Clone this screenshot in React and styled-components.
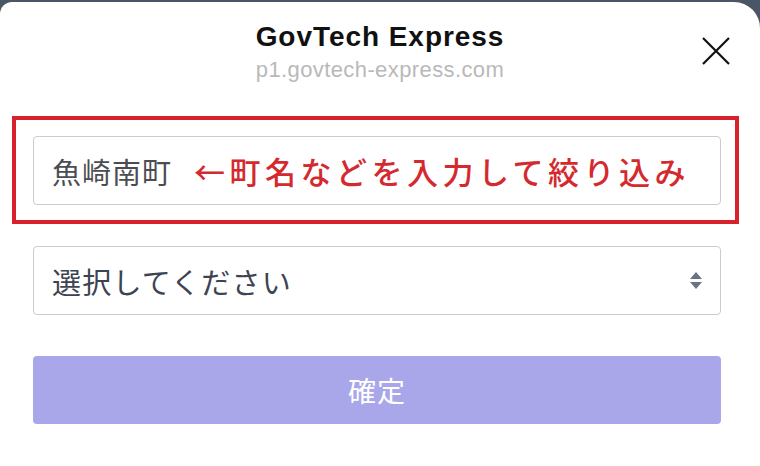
import React from "react";
import styled, { createGlobalStyle } from "styled-components";

const GlobalStyle = createGlobalStyle`
  html, body {
    margin: 0;
    padding: 0;
    background: #4a5566;
  }
  body {
    font-family: "Liberation Sans", "Noto Sans CJK JP", sans-serif;
  }
`;

const Sheet = styled.div`
  margin-top: 2px;
  height: 464px;
  background: #ffffff;
  border-radius: 12px 26px 0 0;
  overflow: hidden;
`;

const Header = styled.div`
  display: grid;
  grid-template-columns: 1fr auto 1fr;
  align-items: start;
  padding: 17px 28px 0 28px;
`;

const TitleBlock = styled.div`
  grid-column: 2;
  display: flex;
  flex-direction: column;
  align-items: center;
`;

const Title = styled.div`
  font-family: "Liberation Sans", sans-serif;
  font-size: 28px;
  font-weight: bold;
  letter-spacing: 0.95px;
  line-height: 36px;
  color: #111;
`;

const SubTitle = styled.div`
  margin-top: 1px;
  font-family: "Liberation Sans", sans-serif;
  font-size: 22px;
  letter-spacing: 0.4px;
  line-height: 28px;
  color: #b9b9b9;
`;

const CloseButton = styled.div`
  grid-column: 3;
  justify-self: end;
  margin-top: 16px;
  width: 32px;
  height: 32px;
`;

const Content = styled.div`
  display: flex;
  flex-direction: column;
  padding: 0 39px 0 33px;
`;

const Highlight = styled.div`
  margin: 32px -18px 0 -21px;
  padding: 16px 14px 15px 17px;
  border: 4px solid #d8222b;
`;

const Field = styled.div`
  box-sizing: border-box;
  display: flex;
  align-items: center;
  height: 69px;
  padding: 0 ${(p) => p.$padRight || 18}px 0 18px;
  border: 1.5px solid #c8cbd0;
  border-radius: 4px;
  background: #fff;
  margin-top: ${(p) => p.$gap || 0}px;
`;

const Value = styled.span`
  font-family: "Noto Sans CJK JP", sans-serif;
  font-size: 29px;
  color: #4b4d52;
  letter-spacing: 1px;
`;

const Hint = styled.span`
  margin-left: 22px;
  font-family: "Noto Sans CJK JP", sans-serif;
  font-size: 31px;
  font-weight: 500;
  letter-spacing: 4.5px;
  color: #d42a2f;
`;

const SelectText = styled.span`
  flex: 1;
  font-family: "Noto Sans CJK JP", sans-serif;
  font-size: 29px;
  letter-spacing: 1.2px;
  color: #3d4350;
`;

const ConfirmButton = styled.button`
  margin-top: 41px;
  height: 68px;
  border: none;
  border-radius: 4px;
  background: #a9a7ea;
  color: #ffffff;
  font-family: "Noto Sans CJK JP", sans-serif;
  font-size: 28px;
  letter-spacing: 1px;
`;

const Close = () => (
  <svg width="32" height="32" viewBox="0 0 32 32">
    <path d="M3 3 L29 29 M29 3 L3 29" stroke="#111" strokeWidth="2.2" fill="none" />
  </svg>
);

const SortArrows = () => (
  <svg width="14" height="20" viewBox="0 0 14 20">
    <path d="M7 1 L13 8 L1 8 Z" fill="#6b7280" />
    <path d="M1 11 L13 11 L7 18 Z" fill="#6b7280" />
  </svg>
);

const App = () => {
  return (
    <>
      <GlobalStyle />
      <Sheet>
        <Header>
          <TitleBlock>
            <Title>GovTech Express</Title>
            <SubTitle>p1.govtech-express.com</SubTitle>
          </TitleBlock>
          <CloseButton>
            <Close />
          </CloseButton>
        </Header>
        <Content>
          <Highlight>
            <Field>
              <Value>魚崎南町</Value>
              <Hint>←町名などを入力して絞り込み</Hint>
            </Field>
          </Highlight>
          <Field $gap={22} $padRight={17}>
            <SelectText>選択してください</SelectText>
            <SortArrows />
          </Field>
          <ConfirmButton>確定</ConfirmButton>
        </Content>
      </Sheet>
    </>
  );
};

export default App;
